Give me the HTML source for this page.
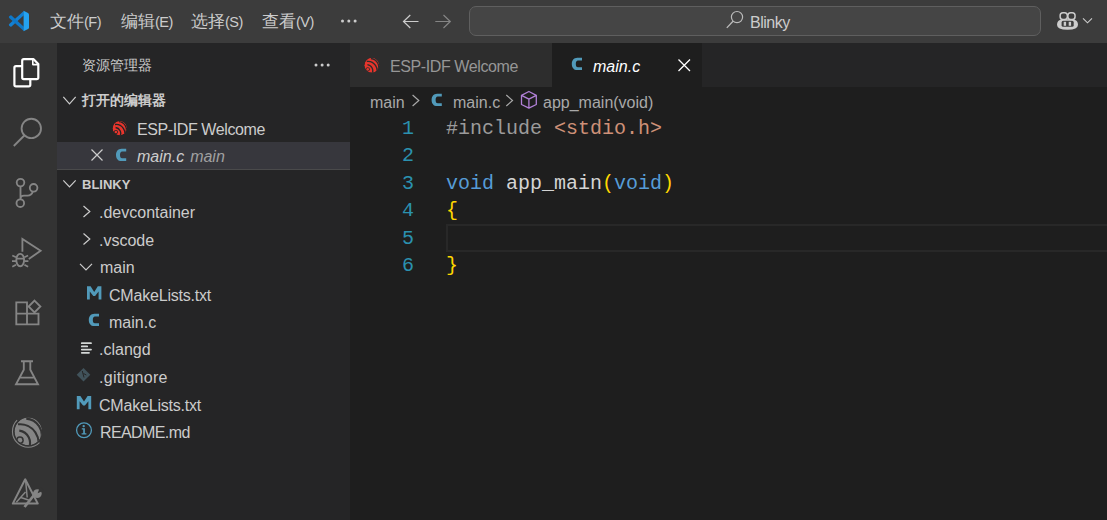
<!DOCTYPE html>
<html><head><meta charset="utf-8">
<style>
*{margin:0;padding:0;box-sizing:border-box}
html,body{width:1107px;height:520px;overflow:hidden;background:#1e1e1e}
body{position:relative;font-family:"Liberation Sans",sans-serif;color:#cccccc}
.a{position:absolute;white-space:nowrap}
.menu{font-size:14.5px;color:#cccccc;top:12px;line-height:20px}
.menu b{font-weight:normal;font-size:17px}.menu i{font-style:normal;letter-spacing:-0.5px}
.row{font-size:16px;line-height:20px;color:#cccccc}
.code{font-family:"Liberation Mono",monospace;font-size:20px;line-height:27.5px}
.ln{left:402px;color:#2b91af}
svg.ov{position:absolute;left:0;top:0}
</style></head><body>
<div class="a" style="left:0;top:0;width:1107px;height:43px;background:#3c3c3c"></div>
<div class="a" style="left:0;top:43px;width:57px;height:477px;background:#333333"></div>
<div class="a" style="left:57px;top:43px;width:293px;height:477px;background:#252526"></div>
<div class="a" style="left:350px;top:43px;width:757px;height:44px;background:#252526"></div>

<!-- title bar -->
<div class="a menu" style="left:50px"><b>文件</b><i>(F)</i></div>
<div class="a menu" style="left:121px"><b>编辑</b><i>(E)</i></div>
<div class="a menu" style="left:191px"><b>选择</b><i>(S)</i></div>
<div class="a menu" style="left:262px"><b>查看</b><i>(V)</i></div>

<div class="a" style="left:469px;top:6px;width:572px;height:30px;border:1px solid #5f5f5f;border-radius:7px;background:#454545"></div>
<div class="a row" style="left:750px;top:13px;letter-spacing:-0.5px">Blinky</div>

<!-- sidebar -->
<div class="a row" style="left:82px;top:55px;font-size:14px">资源管理器</div>
<div class="a row" style="left:82px;top:91px;font-weight:bold;font-size:13.7px">打开的编辑器</div>
<div class="a row" style="left:137px;top:120px;letter-spacing:-0.4px">ESP-IDF Welcome</div>
<div class="a" style="left:57px;top:142px;width:293px;height:27px;background:#37373d"></div>
<div class="a row" style="left:137px;top:147px;font-style:italic">main.c<span style="color:#a0a0a0;margin-left:6px">main</span></div>
<div class="a" style="left:57px;top:169px;width:293px;height:1px;background:#4a4a4b"></div>
<div class="a row" style="left:82px;top:175px;font-weight:bold;font-size:13px">BLINKY</div>
<div class="a row" style="left:99px;top:203px">.devcontainer</div>
<div class="a row" style="left:99px;top:231px">.vscode</div>
<div class="a row" style="left:100px;top:258px">main</div>
<div class="a row" style="left:109px;top:286px;letter-spacing:-0.2px">CMakeLists.txt</div>
<div class="a row" style="left:109px;top:313px">main.c</div>
<div class="a row" style="left:99px;top:340px">.clangd</div>
<div class="a row" style="left:99px;top:368px;letter-spacing:0.3px">.gitignore</div>
<div class="a row" style="left:99px;top:396px;letter-spacing:-0.2px">CMakeLists.txt</div>
<div class="a row" style="left:100px;top:423px;letter-spacing:-0.6px">README.md</div>

<!-- tabs -->
<div class="a" style="left:350px;top:43px;width:202px;height:44px;background:#2d2d2d"></div>
<div class="a" style="left:552px;top:43px;width:150px;height:44px;background:#1e1e1e"></div>
<div class="a row" style="left:390px;top:57px;color:#969696;letter-spacing:-0.4px">ESP-IDF Welcome</div>
<div class="a row" style="left:593px;top:57px;font-style:italic;color:#ffffff">main.c</div>

<!-- breadcrumbs -->
<div class="a row" style="left:370px;top:93px;color:#a9a9a9">main</div>
<div class="a row" style="left:453px;top:93px;color:#a9a9a9">main.c</div>
<div class="a row" style="left:543px;top:93px;color:#a9a9a9">app_main(void)</div>

<!-- editor -->
<div class="a" style="left:446px;top:224px;width:700px;height:28px;border:2px solid #282828"></div>
<div class="a code ln" style="top:115px">1</div>
<div class="a code ln" style="top:142px">2</div>
<div class="a code ln" style="top:170px">3</div>
<div class="a code ln" style="top:197px">4</div>
<div class="a code ln" style="top:225px">5</div>
<div class="a code ln" style="top:252px">6</div>
<div class="a code" style="left:446px;top:115px"><span style="color:#9b9b9b">#include</span> <span style="color:#ce9178">&lt;stdio.h&gt;</span></div>
<div class="a code" style="left:446px;top:170px"><span style="color:#569cd6">void</span> <span style="color:#d4d4d4">app_main</span><span style="color:#ffd700">(</span><span style="color:#569cd6">void</span><span style="color:#ffd700">)</span></div>
<div class="a code" style="left:446px;top:197px;color:#ffd700">{</div>
<div class="a code" style="left:446px;top:252px;color:#ffd700">}</div>

<svg class="ov" width="1107" height="520" viewBox="0 0 1107 520">
<defs>
 <symbol id="esp" viewBox="-16 -16 32 32" overflow="visible">
  <clipPath id="espclip"><circle cx="0" cy="0" r="13.8"/></clipPath>
  <g clip-path="url(#espclip)">
   <circle cx="0" cy="0" r="13.8" fill="currentColor"/>
   <g fill="none" stroke="var(--bg)" stroke-width="2.1">
    <path d="M-9.01 -0.81 A12.22 12.22 0 0 1 0.04 17.42"/>
    <path d="M-10.28 -7.07 A18.17 18.17 0 0 1 7.64 20.06"/>
    <path d="M-2.03 -12.82 A16.67 16.67 0 0 1 12.41 9.5"/>
   </g>
   <circle cx="-8.38" cy="8.76" r="3.9" fill="var(--bg)"/>
   <circle cx="-8.38" cy="8.76" r="2.3" fill="currentColor"/>
  </g>
  <path d="M-11.2 -11.2 A15.6 15.6 0 0 0 11.2 11.2" fill="none" stroke="currentColor" stroke-width="1.1"/>
 </symbol>

 <symbol id="esps" viewBox="-16 -16 32 32" overflow="visible">
  <clipPath id="espclip2"><circle cx="0" cy="0" r="15"/></clipPath>
  <g clip-path="url(#espclip2)">
   <circle cx="0" cy="0" r="15" fill="currentColor"/>
   <g fill="none" stroke="var(--bg)" stroke-width="2.8">
    <path d="M-8.75 -1.4 A12.2 12.2 0 0 1 0.27 16.8"/>
    <path d="M-10.02 -7.76 A18.2 18.2 0 0 1 7.96 19.4"/>
    <path d="M-1.8 -13.5 A16.9 16.9 0 0 1 11.5 11.75"/>
   </g>
   <circle cx="-8.1" cy="8.1" r="4.3" fill="var(--bg)"/>
   <circle cx="-8.1" cy="8.1" r="2.6" fill="currentColor"/>
  </g>
 </symbol>
</defs>
<!-- vscode logo -->
<g transform="translate(9,11)" stroke-linejoin="round">
 <path d="M14.8 -0.1 L0.2 13.1 Q-0.6 13.9 0.2 14.7 L1.3 15.6 Q1.9 16 2.5 15.5 L14.8 4.2 Z" fill="#1380d3"/>
 <path d="M14.8 20.1 L0.2 6.9 Q-0.6 6.1 0.2 5.3 L1.3 4.4 Q1.9 4 2.5 4.5 L14.8 15.8 Z" fill="#0f78c8"/>
 <path d="M14.6 -0.2 L19 2 Q20 2.6 20 3.6 V16.4 Q20 17.4 19 18 L14.6 20.2 Z" fill="#24a2f1"/>
</g>
<!-- menu dots -->
<g fill="#cccccc"><circle cx="342.5" cy="21" r="1.5"/><circle cx="348.8" cy="21" r="1.5"/><circle cx="355.1" cy="21" r="1.5"/></g>
<!-- nav arrows -->
<path d="M418.5 21.5 H403 M410.3 15 L403.5 21.5 L410.3 28" fill="none" stroke="#cccccc" stroke-width="1.2"/>
<path d="M435.3 21.5 H450.8 M443.5 15 L450.3 21.5 L443.5 28" fill="none" stroke="#858585" stroke-width="1.2"/>
<!-- search in command center -->
<circle cx="737" cy="17.1" r="5.6" fill="none" stroke="#bbbbbb" stroke-width="1.2"/>
<path d="M733 21.2 L726.8 27.9" stroke="#bbbbbb" stroke-width="1.3" fill="none"/>
<!-- copilot -->
<path d="M1062 19.2 Q1057 20 1057 24.8 Q1057 29.8 1067.5 29.8 Q1078 29.8 1078 24.8 Q1078 20 1073 19.2 Z" fill="#cccccc"/>
<rect x="1061.6" y="20.8" width="12.1" height="6" rx="1.6" fill="#3c3c3c"/>
<g fill="#cccccc"><rect x="1063.7" y="21.8" width="2.4" height="4"/><rect x="1068.7" y="21.8" width="2.4" height="4"/></g>
<g fill="none" stroke="#cccccc" stroke-width="1.5">
 <rect x="1060.15" y="12.75" width="7.2" height="6.8" rx="2.8"/>
 <rect x="1067.85" y="12.75" width="7.2" height="6.8" rx="2.8"/>
</g>
<path d="M1083 18.3 L1087.5 22.8 L1092 18.3" fill="none" stroke="#cccccc" stroke-width="1.1"/>

<!-- activity bar icons -->
<g fill="none" stroke="#ffffff" stroke-width="2.2" stroke-linejoin="round">
 <path d="M22.2 66.2 H16 Q14.4 66.2 14.4 67.8 V84.8 Q14.4 86.4 16 86.4 H28.7 Q30.3 86.4 30.3 84.8 V80"/>
 <path d="M23.8 59.2 H33.6 L38.3 64 V77.6 Q38.3 79.2 36.7 79.2 H23.8 Q22.2 79.2 22.2 77.6 V60.8 Q22.2 59.2 23.8 59.2 Z"/>
 <path d="M32.8 59.2 V64.6 H38.3" stroke-width="1.6"/>
</g>
<g fill="none" stroke="#858585" stroke-width="1.85">
 <circle cx="31.3" cy="128.4" r="9.7"/>
 <path d="M24.8 135 L13.8 146"/>
 <circle cx="20.5" cy="182.6" r="3.8"/>
 <circle cx="33.6" cy="187.8" r="3.8"/>
 <circle cx="20.3" cy="203.2" r="3.8"/>
 <path d="M20.5 186.4 V199.4 M32.8 191.5 Q31.6 195.6 27.5 195.6 H24 Q20.5 195.6 20.5 199"/>
 <path d="M22.4 251.8 V239 L40.6 250.8 L28.8 259"/>
 <ellipse cx="20.2" cy="260" rx="3.9" ry="6.2"/>
 <path d="M16 258.6 H24.4 M12.3 255.4 L16 257.2 M28.1 255.4 L24.4 257.2 M12 261.2 H16 M28.4 261.2 H24.4 M12.3 266.8 L16 264.8 M28.1 266.8 L24.4 264.8" stroke-width="1.7"/>
 <path d="M16.3 302.4 H27 V324.4 H16.3 Z M16.3 313.6 H38.5 V324.4 H27"/>
 <path d="M34.5 300.6 L40.4 306.5 L34.5 312.4 L28.6 306.5 Z"/>
 <path d="M21 361.2 H33 M23.8 361.2 V369.8 L16 384.2 H38 L30.3 369.8 V361.2 M19.5 377.6 H34.5"/>
</g>
<g style="color:#858585;--bg:#333333"><use href="#esp" x="12.3" y="415.4" width="32" height="32"/></g>
<g fill="none" stroke="#858585" stroke-width="1.7" stroke-linejoin="round">
 <path d="M25.2 479.3 L12.8 503.6 H37.8 Z" stroke-width="2"/>
 <path d="M25.6 480 L27.2 497.5 M16.3 502.2 L25.5 492 M20.9 497.5 L29.2 500.3" stroke-width="1.5"/>
 <path d="M24.5 507 L34.5 494.5" stroke-width="2.8"/>
</g>
<circle cx="37.3" cy="493.6" r="4.4" fill="#858585"/><path d="M37.6 493.3 L40.2 486.8 L44 490.6 Z" fill="#333333"/>
<!-- sidebar icons -->
<g fill="#cccccc"><circle cx="316" cy="65" r="1.5"/><circle cx="322.1" cy="65" r="1.5"/><circle cx="328.2" cy="65" r="1.5"/></g>
<g fill="none" stroke="#cccccc" stroke-width="1.2">
 <path d="M63.3 96.8 L69.5 103.8 L75.7 96.8"/>
 <path d="M63.3 180.3 L69.5 186.8 L75.7 180.3"/>
 <path d="M83.5 206 L89.8 211.5 L83.5 217"/>
 <path d="M83.5 233.5 L89.8 239 L83.5 244.5"/>
 <path d="M80 263.8 L86 270 L92 263.8"/>
 <path d="M91.5 149.5 L102.5 160.5 M102.5 149.5 L91.5 160.5"/>
</g>
<g style="color:#e7352c;--bg:#252526"><use href="#esps" x="112.1" y="120.5" width="15.4" height="15.4"/></g>
<g style="color:#e7352c;--bg:#2d2d2d"><use href="#esps" x="363.8" y="57.3" width="16" height="16"/></g>
<!-- clangd -->
<g stroke="#d4d7d6" stroke-width="1.8" stroke-linecap="round">
 <path d="M81.8 343.2 H91 M81.8 346.4 H87.2 M81.8 349.6 H91 M81.8 352.8 H89"/>
</g>
<!-- gitignore -->
<path d="M83.5 368 L90.3 374.8 L83.5 381.6 L76.7 374.8 Z" fill="#41535b"/>
<path d="M82.3 371 L84 377.5 M83.5 373.5 L86.3 375" stroke="#252526" stroke-width="1" fill="none"/>
<!-- info -->
<circle cx="84" cy="430.3" r="7.4" fill="none" stroke="#519aba" stroke-width="1.3"/>
<g fill="#519aba"><circle cx="83.7" cy="426.1" r="1.2"/><path d="M81.8 428.2 H84.9 V433.3 H86.4 V434.6 H81.6 V433.3 H83.2 V429.5 H81.8 Z"/></g>
<!-- M icons -->
<path id="mi" d="M87.0 299.5 V286.3 H90.6 L94.2 291.9 L97.8 286.3 H101.4 V299.5 H98.6 V291.5 L95.1 295.9 H93.3 L89.8 291.5 V299.5 Z" fill="#519aba"/>
<path d="M76.8 409.2 V396.0 H80.4 L84.0 401.6 L87.6 396.0 H91.2 V409.2 H88.4 V401.2 L84.9 405.6 H83.1 L79.6 401.2 V409.2 Z" fill="#519aba"/>
<!-- breadcrumbs -->
<g fill="none" stroke="#a9a9a9" stroke-width="1.2">
 <path d="M412.6 95 L418.8 100.5 L412.6 106"/>
 <path d="M506.3 95 L512.5 100.5 L506.3 106"/>
</g>
<g fill="none" stroke="#b180d7" stroke-width="1.3" stroke-linejoin="round">
 <path d="M528.9 91.5 L536.3 95.3 V104.5 L528.9 108.2 L521.5 104.5 V95.3 Z M521.5 95.3 L528.9 99.2 L536.3 95.3 M528.9 99.2 V108"/>
</g>
<!-- tab close -->
<path d="M678.5 59.5 L690 71 M690 59.5 L678.5 71" stroke="#ffffff" stroke-width="1.3" fill="none"/>
<!-- C icons -->
<path d="M126.20 148.70 H121.50 C118.00 148.70 116.00 151.50 116.00 154.90 C116.00 158.30 118.00 161.10 121.50 161.10 H126.20 V158.20 H122.20 C120.70 158.20 120.00 156.90 120.00 154.90 C120.00 152.90 120.70 151.60 122.20 151.60 H126.20 Z M99.00 313.70 H94.30 C90.80 313.70 88.80 316.50 88.80 319.90 C88.80 323.30 90.80 326.10 94.30 326.10 H99.00 V323.20 H95.00 C93.50 323.20 92.80 321.90 92.80 319.90 C92.80 317.90 93.50 316.60 95.00 316.60 H99.00 Z M582.00 57.70 H577.30 C573.80 57.70 571.80 60.50 571.80 63.90 C571.80 67.30 573.80 70.10 577.30 70.10 H582.00 V67.20 H578.00 C576.50 67.20 575.80 65.90 575.80 63.90 C575.80 61.90 576.50 60.60 578.00 60.60 H582.00 Z M441.80 93.70 H437.10 C433.60 93.70 431.60 96.50 431.60 99.90 C431.60 103.30 433.60 106.10 437.10 106.10 H441.80 V103.20 H437.80 C436.30 103.20 435.60 101.90 435.60 99.90 C435.60 97.90 436.30 96.60 437.80 96.60 H441.80 Z" fill="#519aba"/>
</svg>
</body></html>
